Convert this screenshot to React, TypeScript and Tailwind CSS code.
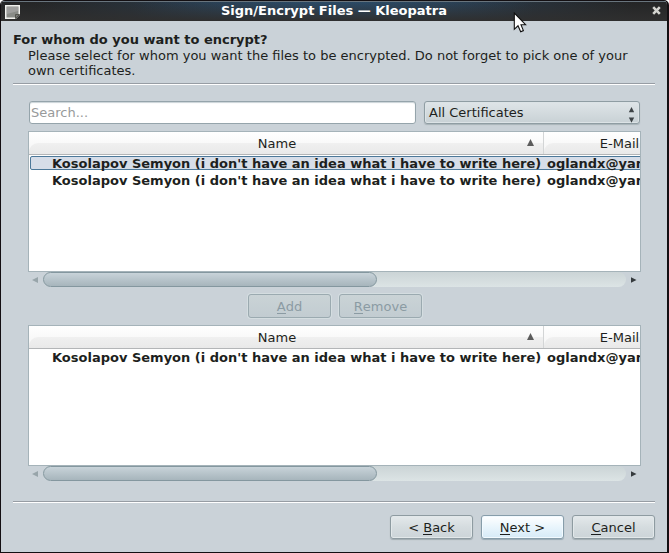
import type { ReactNode } from "react";

const NAME = "Kosolapov Semyon (i don't have an idea what i have to write here)";

function Rule() {
  return <div className="ml-[12px] mr-[12px] h-[2px] shrink-0 border-t border-[#979da4] bg-white" />;
}

function HeaderCell({ label, sorted, className }: { label: string; sorted?: boolean; className: string }) {
  return (
    <div
      className={`relative flex h-[22px] shrink-0 justify-center bg-linear-to-b from-white to-[#f4f4f4] pt-1 ${className}`}
    >
      <div className="absolute inset-x-0 bottom-0 h-[11px] rounded-tl-[9px] bg-linear-to-b from-[#f0f0f0] to-[#e9e9e9]" />
      <span className="relative">{label}</span>
      {sorted && (
        <svg className="absolute right-[9px] top-[7px]" width="7" height="7" viewBox="0 0 7 7">
          <path d="M3.5 0L7 7H0Z" fill="#5c5c5c" />
        </svg>
      )}
    </div>
  );
}

function Row({ selected }: { selected?: boolean }) {
  return (
    <div className="relative h-[17px] w-[668px] font-bold">
      {selected && (
        <div className="absolute left-[1px] right-0 top-0 h-[14px] rounded-[2px] border border-[#4c7899] bg-[#d6dde8]" />
      )}
      <div className="relative flex">
        <span className="w-[518px] shrink-0 pl-[23px]">{NAME}</span>
        <span>oglandx@yandex.ru</span>
      </div>
    </div>
  );
}

function CertificateTable({ children }: { children: ReactNode }) {
  return (
    <div className="ml-[27px] w-[613px]">
      <div className="h-[141px] overflow-hidden border border-[#a5b3b9] bg-white">
        <div className="flex h-[23px] w-[668px] border-b border-[#b3b5b7]">
          <HeaderCell label="Name" sorted className="w-[515px] border-r border-r-[#d3d5d6] pr-[18px]" />
          <HeaderCell label="E-Mail" className="w-[151px]" />
        </div>
        <div className="flex flex-col pt-px">{children}</div>
      </div>
      <div className="flex h-[15px] items-center">
        <svg className="ml-[4px] mr-[5px] shrink-0" width="6" height="6" viewBox="0 0 6 6">
          <path d="M6 0V6L0 3Z" fill="#98a5aa" />
        </svg>
        <div className="h-[15px] w-[583px] rounded-full bg-linear-to-b from-[#cbd4d6] to-[#dce4e5]">
          <div className="h-[15px] w-[334px] rounded-full border border-[#84979f] bg-linear-to-b from-[#c8d3d9] to-[#a7b5bc]" />
        </div>
        <svg className="ml-[5px] shrink-0" width="6" height="6" viewBox="0 0 6 6">
          <path d="M0 0.3V5.7L5.5 3Z" fill="#353a3d" />
        </svg>
      </div>
    </div>
  );
}

function Key({ children }: { children: string }) {
  return <span className="inline-block h-[15px] border-b border-current">{children}</span>;
}

function Button({ tone = "normal", children }: { tone?: "normal" | "disabled" | "primary"; children: ReactNode }) {
  const tones = {
    normal:
      "border-[#8e9ba1] bg-linear-to-b from-[#e4e9eb] via-[#d5dcdf] to-[#ccd4d8] text-[#1d1f20] shadow-[inset_0_0_0_1px_#e2e8ea,0_1px_1px_#a0abb1]",
    disabled:
      "border-[#9baab0] bg-linear-to-b from-[#cad3d6] to-[#c2ccd1] text-[#8b9ba3] shadow-[0_0_0_1px_#d4dde0]",
    primary:
      "border-[#879daa] bg-linear-to-b from-white via-[#e9f5fc] to-[#d6eaf7] text-[#1d1f20] shadow-[inset_0_0_0_1px_#f2faff,0_1px_1px_#97a8b3]",
  };
  return (
    <button
      className={`flex h-[24px] w-[83px] justify-center whitespace-pre rounded-[3px] border pt-[4px] leading-[15px] ${tones[tone]}`}
    >
      {children}
    </button>
  );
}

export default function App() {
  return (
    <div className="h-[553px] w-[669px] bg-white">
      <div className="relative flex h-[553px] w-[669px] flex-col overflow-hidden whitespace-nowrap rounded-t-[5px] border border-r-2 border-[#130f12] bg-[#cad2d8] font-['DejaVu_Sans',sans-serif] text-[13px] leading-[15px] text-[#1d1f20]">
        <div className="relative h-[20px] shrink-0 border-t border-[#68747d] bg-linear-to-r from-[#242526] from-5% via-[#2b4a66] to-[#242526] to-95%">
          <div className="absolute inset-0 bg-linear-to-r from-[#242526]/0 from-20% via-[#2b4a66] to-[#242526]/0 to-80%" />
          <div className="absolute inset-0 bg-linear-to-b from-[#2f2f2f]/0 to-[#2f2f2f]" />
          <div className="relative flex justify-between text-white">
            <svg className="ml-1 mt-[3px]" width="15" height="14" viewBox="0 0 15 14">
              <path d="M.75.75H14.25V9.5L10.5 13.25H.75Z" fill="#898b87" stroke="#f1f1ee" strokeWidth="1.5" />
              <path d="M2 2H13V6L2 9Z" fill="#aaa" opacity=".65" />
              <path d="M10.5 13.5V9.5H14.5Z" fill="#777" stroke="#55564f" />
            </svg>
            <span className="mr-[4px] pt-px font-bold">Sign/Encrypt Files — Kleopatra</span>
            <svg className="mr-[6px] mt-[4px]" width="9" height="9" viewBox="0 0 9 9">
              <path d="M1.2 1.2L7.8 7.8M7.8 1.2L1.2 7.8" stroke="#d3d3cf" strokeWidth="2.6" />
            </svg>
          </div>
        </div>

        <div className="h-[62px] shrink-0 pl-[12px] pt-[11px]">
          <div className="h-[16px] font-bold">For whom do you want to encrypt?</div>
          <p className="w-[640px] whitespace-normal pl-[15px]">
            Please select for whom you want the files to be encrypted. Do not forget to pick one of your own
            certificates.
          </p>
        </div>
        <Rule />

        <div className="mb-[7px] ml-[27px] mt-[16px] flex h-[23px] w-[613px] shrink-0 gap-[8px]">
          <input
            className="ml-px h-[23px] w-[387px] rounded-[3px] border border-[#95a4ab] bg-white px-[1px] leading-[15px] shadow-[inset_0_1px_1px_#cad3d7] placeholder:text-[#989a9b]"
            placeholder="Search..."
          />
          <div className="flex h-[23px] w-[216px] justify-between rounded-[3px] border border-[#8f9da3] bg-linear-to-b from-[#dfe5e8] to-[#c8d1d5] pl-[4px] pr-[4px] pt-[3px] shadow-[inset_0_0_0_1px_#dce3e6,0_1px_1px_#a8b3b8]">
            <span>All Certificates</span>
            <svg className="mt-[2px]" width="7" height="16" viewBox="0 0 7 16">
              <path d="M3.5 0L6.2 5.3H.8ZM3.5 15.8L6.2 10.5H.8Z" fill="#3d4346" />
            </svg>
          </div>
        </div>

        <CertificateTable>
          <Row selected />
          <Row />
        </CertificateTable>

        <div className="flex h-[38px] shrink-0 gap-[8px] pl-[247px] pt-[7px]">
          <Button tone="disabled">
            <Key>A</Key>dd
          </Button>
          <Button tone="disabled">
            <Key>R</Key>emove
          </Button>
        </div>

        <CertificateTable>
          <Row />
        </CertificateTable>

        <div className="mt-[20px]">
          <Rule />
        </div>
        <div className="mr-[12px] mt-[12px] flex justify-end gap-[8px]">
          <Button>
            {"< "}
            <Key>B</Key>ack
          </Button>
          <Button tone="primary">
            <Key>N</Key>
            {"ext >"}
          </Button>
          <Button>
            <Key>C</Key>ancel
          </Button>
        </div>

        <svg className="absolute left-[512px] top-[11px]" width="14" height="22" viewBox="0 0 14 22">
          <path
            d="M1.3 1V17.3L5 13.8L7.7 19.8L10.4 18.6L8 12.7H12.6Z"
            fill="white"
            stroke="#111"
            strokeWidth="1.1"
          />
        </svg>
      </div>
    </div>
  );
}
